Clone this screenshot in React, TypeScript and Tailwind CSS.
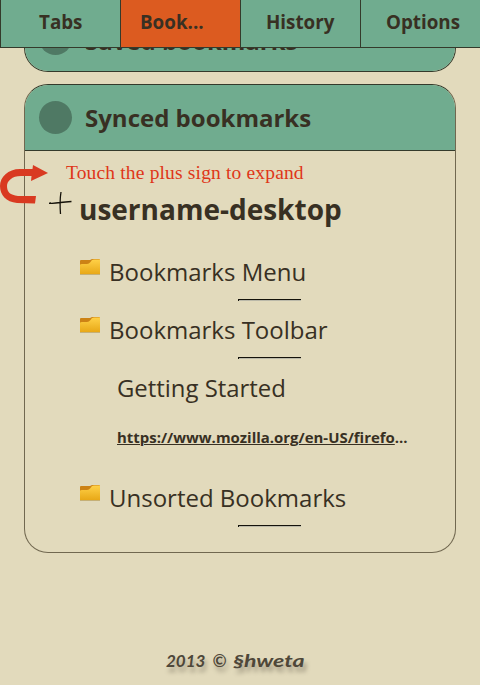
import React from "react";

function Tab({ label, active = false, shift = "" }: { label: string; active?: boolean; shift?: string }) {
  return (
    <div
      className={`h-full w-[120px] shrink-0 border-l border-[#343a2b] text-[18.8px] leading-[44px] font-bold whitespace-nowrap ${active ? "bg-[#dc5b20]" : ""} ${shift}`}
    >
      {label}
    </div>
  );
}

function CardHeader({ title, shift = "pt-px" }: { title: string; shift?: string }) {
  return (
    <div className="flex h-[66px] items-center gap-[13px] border-b border-[#343a2b] bg-[#70ac8f] pl-[14px]">
      <span className="size-[33px] shrink-0 rounded-full bg-[#4f7964]" />
      <h2 className={`text-[24px] leading-[34px] font-bold whitespace-nowrap ${shift}`}>{title}</h2>
    </div>
  );
}

function Folder() {
  return (
    <svg className="mt-[9px] h-[17px] w-[20px] shrink-0" viewBox="0 0 20 17">
      <defs>
        <linearGradient id="folder" x1="0" y1="0" x2="0" y2="1">
          <stop offset="0" stopColor="#ffd148" />
          <stop offset="1" stopColor="#e8a817" />
        </linearGradient>
      </defs>
      <path d="M0 2Q0 1 1 1H10L12 0H19Q20 0 20 1V15H0Z" fill="#cc8215" />
      <path d="M0 6Q0 5 2 5H7Q9 5 10.500 3L12 1Q12.500 .5 14 .5H20V15H0Z" fill="url(#folder)" />
      <path d="M0 15.500H20" stroke="#c5b077" />
    </svg>
  );
}

function FolderRow({ name }: { name: string }) {
  return (
    <div className="h-[58px]">
      <div className="flex h-[49px] gap-[9px]">
        <Folder />
        <span className="text-[24px] leading-[44px] whitespace-nowrap">{name}</span>
      </div>
      <div className="ml-[158px] h-[3px] w-[63px] border-t border-[#15130b]">
        <div className="h-px border-l border-[#15130b] bg-[#bbb9a9]" />
      </div>
    </div>
  );
}

export default function App() {
  return (
    <div className="relative flex h-[685px] w-[480px] flex-col overflow-hidden bg-[#e2dabc] font-['Open_Sans',sans-serif] text-[#383023]">
      <nav className="flex h-[48px] shrink-0 border-b border-[#343a2b] bg-[#70ac8f]">
        <Tab label="Tabs" shift="pl-[38px]" />
        <Tab label="Book..." active shift="pl-[19px]" />
        <Tab label="History" shift="pl-[25px]" />
        <Tab label="Options" shift="pl-[25px]" />
      </nav>
      <main className="h-[505px] shrink-0 overflow-hidden px-[24px]">
        <section className="-mt-[42px] mb-[12px] h-[66px] overflow-hidden rounded-b-[24px] border-x border-b border-[#343a2b] bg-[#70ac8f]">
          <CardHeader title="Saved bookmarks" shift="pt-[4px]" />
        </section>
        <section className="h-[469px] overflow-hidden rounded-[24px] border border-[#716850] border-t-[#343a2b]">
          <CardHeader title="Synced bookmarks" />
          <div>
            <p className="h-[43px] pt-[8px] pl-[41px] font-['Liberation_Serif',serif] text-[19.5px] leading-[27px] tracking-[0.16px] whitespace-nowrap text-[#df3618]">
              Touch the plus sign to expand
            </p>
            <div className="flex h-[56px]">
              <svg className="-mt-[4px] ml-[24px] h-[25px] w-[24px] shrink-0" viewBox="0 0 24 25" fill="none" stroke="#15120a">
                <path d="M0 13.300H3Q10 12.500 22.500 11.500M12 2Q10.500 11 11.500 24" strokeWidth="1.3" />
                <circle cx="1.200" cy="13" r=".8" fill="#15120a" stroke="none" />
              </svg>
              <h3 className="ml-[6px] text-[28px] leading-[30px] font-bold whitespace-nowrap">username-desktop</h3>
            </div>
            <div className="pl-[55px]">
              <FolderRow name="Bookmarks Menu" />
              <FolderRow name="Bookmarks Toolbar" />
              <div className="h-[110px] pl-[37px]">
                <p className="h-[57px] text-[23.9px] leading-[44px]">Getting Started</p>
                <p className="text-[14.95px] leading-[28px] font-bold whitespace-nowrap">
                  <a className="underline decoration-1 underline-offset-[1px]">https://www.mozilla.org/en-US/firefo</a>...
                </p>
              </div>
              <FolderRow name="Unsorted Bookmarks" />
            </div>
          </div>
        </section>
      </main>
      <svg className="absolute top-[164px] left-0 h-[42px] w-[50px]" viewBox="0 0 50 42">
        <path
          d="M33 1L48 9L31 17L31.500 12H21C12 12 7 17 7 22C7 28 10 31 18 32L36 32L35 39.500L17 39C6 38 0 31 0 22C0 13 8 5 20 5H32.500Z"
          fill="#d93a21"
        />
      </svg>
      <footer className="flex gap-[7px] pt-[95px] pl-[166px] font-['Lato',sans-serif] text-[17px] leading-[26px] font-bold whitespace-nowrap text-[#4e4739] italic [text-shadow:2px_5px_4px_#a39b84]">
        <span>2013</span>
        <span>©</span>
        <span className="origin-left scale-x-[1.36]">§hweta</span>
      </footer>
    </div>
  );
}
